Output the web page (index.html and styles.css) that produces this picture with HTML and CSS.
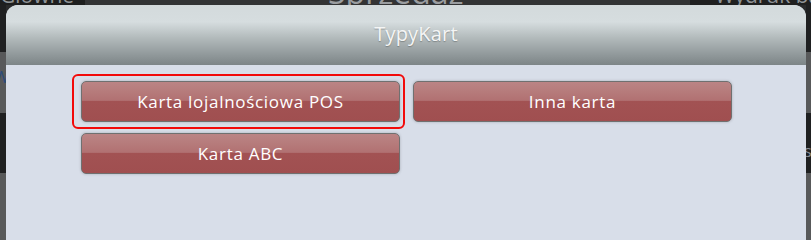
FILE: index.html
```html
<!DOCTYPE html>
<html lang="pl">
<head>
<meta charset="utf-8">
<title>TypyKart</title>
<link rel="stylesheet" href="styles.css">
</head>
<body>
<div class="app">
  <div class="topbar">
    <div class="tb-seg tb-a"><span class="tab">Główne</span></div>
    <div class="tb-seg tb-b"><span class="tab big">Sprzedaż</span></div>
    <div class="tb-seg tb-c"><span class="tab">Wydruk ba</span></div>
  </div>
  <div class="main">
    <div class="side">
      <div class="seg dark s1"></div>
      <div class="seg gray s2"><span class="frag">W</span></div>
      <div class="seg dark s3"></div>
      <div class="seg gray s4"></div>
    </div>
    <div class="center"></div>
    <div class="side">
      <div class="seg dark s1"></div>
      <div class="seg gray s2"></div>
      <div class="seg dark s3"><span class="frag r">s</span></div>
      <div class="seg gray s4"></div>
    </div>
  </div>
</div>

<div class="dialog">
  <div class="dialog-header">TypyKart</div>
  <div class="dialog-body">
    <div class="grid">
      <button class="btn focused">Karta lojalnościowa POS</button>
      <button class="btn">Inna karta</button>
      <button class="btn">Karta ABC</button>
    </div>
  </div>
</div>
</body>
</html>
```

FILE: styles.css
```css
* { box-sizing: border-box; }
html, body { margin: 0; padding: 0; }
html { background: #222; }
body {
  width: 811px;
  height: 100vh;
  min-height: 205px;
  overflow: hidden;
  background: #222;
  font-family: "Open Sans", "Noto Sans", sans-serif;
  position: relative;
}
.app {
  display: flex;
  flex-direction: column;
  height: 100%;
}
.topbar {
  height: 5px;
  flex: none;
  display: flex;
  overflow: hidden;
}
.tb-seg { overflow: hidden; white-space: nowrap; }
.tb-a { width: 85px; background: #1e1f1f; }
.tb-b { width: 605px; background: #333435; padding-left: 243px; }
.tb-c { flex: 1; background: #1f2020; padding-left: 25px; }
.tab {
  display: block;
  color: #8f9396;
  font-size: 21px;
  line-height: 22px;
  margin-top: -16px;
}
.big {
  font-size: 32px;
  line-height: 32px;
  margin-top: -24px;
  color: #9a9da0;
}
.main {
  flex: 1;
  display: flex;
}
.side {
  width: 6px;
  display: flex;
  flex-direction: column;
  overflow: hidden;
}
.side:last-child { width: 5px; }
.center { flex: 1; background: #2a2b2c; }
.seg { position: relative; }
.dark { background: #1f2021; }
.gray { background: #58595a; }
.s1 { height: 47px; }
.s2 { height: 61px; }
.s3 { height: 60px; }
.s4 { flex: 1; }
.frag {
  display: block;
  color: #2b4b7a;
  font-size: 16px;
  line-height: 16px;
  margin-top: 17px;
  margin-left: -6px;
}
.frag.r { color: #8a8f96; margin-top: 30px; margin-left: -2px; }

.dialog {
  position: absolute;
  left: 6px;
  top: 5px;
  width: 800px;
  bottom: 0;
  border-radius: 12px 12px 0 0;
  overflow: hidden;
  background: #d8dee9;
  display: flex;
  flex-direction: column;
}
.dialog-header {
  height: 60px;
  flex: none;
  background: linear-gradient(to bottom, #d3dadc 0%, #d6dddf 28%, #b2babb 55%, #949c9e 80%, #7d8587 100%);
  color: #f4f5f5;
  font-size: 20px;
  letter-spacing: 0.2px;
  display: flex;
  align-items: center;
  justify-content: center;
  text-shadow: 0 1px 1px rgba(0,0,0,0.25);
  padding: 0 0 4px 20px;
}
.dialog-body {
  flex: 1;
  padding: 16px 74px 0 75px;
}
.grid {
  display: grid;
  grid-template-columns: 319px 319px;
  grid-auto-rows: 41px;
  column-gap: 13px;
  row-gap: 11px;
}
.btn {
  position: relative;
  margin: 0;
  padding: 0;
  border: 1px solid #707070;
  border-radius: 5px;
  background: linear-gradient(to bottom, #bb8485 0%, #b67b7b 25%, #b17172 47%, #a25253 50%, #a04f50 100%);
  color: #ffffff;
  font-family: "Open Sans", "Noto Sans", sans-serif;
  font-size: 17px;
  letter-spacing: 0.7px;
  box-shadow: 0 0 3px rgba(0,0,0,0.22);
  text-align: center;
}
.focused::after {
  content: "";
  position: absolute;
  top: -8px;
  left: -10px;
  right: -6px;
  bottom: -8px;
  border: 2px solid #f20a0a;
  border-radius: 6px;
}
```
